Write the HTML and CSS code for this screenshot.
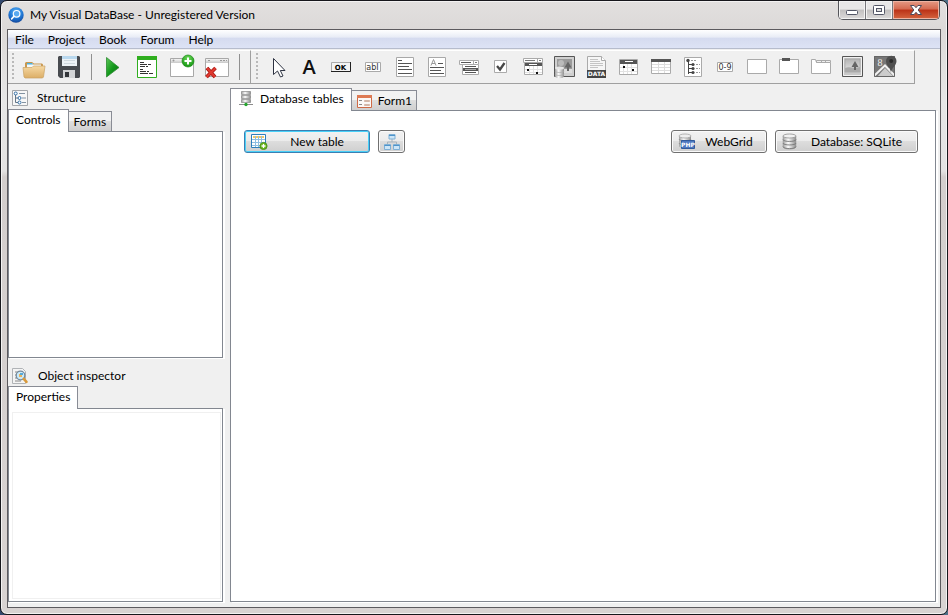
FILE: index.html
```html
<!DOCTYPE html>
<html lang="en">
<head>
<meta charset="utf-8">
<title>My Visual DataBase - Unregistered Version</title>
<link rel="stylesheet" href="styles.css">
</head>
<body>
<svg width="0" height="0" class="defs" aria-hidden="true">
  <defs>
    <linearGradient id="g-folder" x1="0" y1="0" x2="0" y2="1"><stop offset="0" stop-color="#f6d9a4"/><stop offset="1" stop-color="#dcae66"/></linearGradient>
    <linearGradient id="g-play" x1="0" y1="0" x2="1" y2="1"><stop offset="0" stop-color="#5fc75a"/><stop offset=".5" stop-color="#149a1c"/><stop offset="1" stop-color="#0a6a12"/></linearGradient>
    <linearGradient id="g-bar" x1="0" y1="0" x2="0" y2="1"><stop offset="0" stop-color="#f4f4f4"/><stop offset="1" stop-color="#c8c8c8"/></linearGradient>
    <linearGradient id="g-cyl" x1="0" y1="0" x2="1" y2="0"><stop offset="0" stop-color="#a2a2a2"/><stop offset=".4" stop-color="#fafafa"/><stop offset="1" stop-color="#8e8e8e"/></linearGradient>
    <linearGradient id="g-pic" x1="0" y1="0" x2="0" y2="1"><stop offset="0" stop-color="#b4b4b4"/><stop offset="1" stop-color="#e6e6e6"/></linearGradient>
    <radialGradient id="g-add" cx=".5" cy=".3" r=".7"><stop offset="0" stop-color="#6fdc5c"/><stop offset="1" stop-color="#12930f"/></radialGradient>
    <radialGradient id="g-app" cx=".5" cy=".3" r=".75"><stop offset="0" stop-color="#5cb4f6"/><stop offset=".6" stop-color="#1e74d2"/><stop offset="1" stop-color="#123f90"/></radialGradient>
  </defs>
</svg>

<div class="window">
  <header class="titlebar">
    <svg class="app-icon" width="16" height="16" viewBox="0 0 16 16" aria-hidden="true"><circle cx="8" cy="8" r="7.7" fill="url(#g-app)"/><circle cx="8.6" cy="6.800" r="3.300" fill="#5aaaf0" stroke="#fff" stroke-width="1.200"/><path d="M6 9.300l-2.400 2.600" stroke="#fff" stroke-width="1.600" stroke-linecap="round"/></svg>
    <h1 class="title">My Visual DataBase - Unregistered Version</h1>
    <div class="caption-buttons">
      <button class="caption min" aria-label="Minimize"><svg width="14" height="12" viewBox="0 0 14 12"><rect x="1.5" y="6.5" width="11" height="4" rx="1" fill="#fff" stroke="#535666"/></svg></button>
      <button class="caption max" aria-label="Maximize"><svg width="14" height="12" viewBox="0 0 14 12"><rect x="1.5" y="1.5" width="11" height="9" rx="1" fill="#fff" stroke="#535666"/><rect x="4.5" y="4.5" width="5" height="3" fill="#ddd" stroke="#535666"/></svg></button>
      <button class="caption close" aria-label="Close"><svg width="14" height="12" viewBox="0 0 14 12"><path d="M1.500 1.500h3.600L7 3.700l1.900-2.200h3.600L9.200 6l3.300 4.500H8.900L7 8.300l-1.900 2.200H1.500L4.800 6z" fill="#fff" stroke="#4d4a5c"/></svg></button>
    </div>
  </header>

  <div class="client">
    <nav class="menubar">
      <button>File</button><button>Project</button><button>Book</button><button>Forum</button><button>Help</button>
    </nav>

    <div class="toolbars">
      <div class="band" role="toolbar" aria-label="Project">
        <span class="grip"></span>
        <button class="tool wide" aria-label="Open"><svg width="35" height="32" viewBox="0 0 35 32"><path d="M8 20v-8l1-1h6l2 1.500h8l1 1V20z" fill="#c9984f"/><path d="M10 12h5l1 1.500h8V17H10z" fill="#f4f8fa"/><path d="M10 12h5l1 1.500h-6z" fill="#4fb0dc"/><path d="M6 16.500h9l1.500-1.500H28l-1.500 11-1 1H8l-1-1z" fill="url(#g-folder)" stroke="#c9a264" stroke-width=".7"/></svg></button>
        <button class="tool wide" aria-label="Save"><svg width="35" height="32" viewBox="0 0 35 32"><path d="M6 6l1-1h20l1 1v20l-1 1H8l-2-2z" fill="#484b50"/><path d="M10 5h15v10H10z" fill="#edf2f6"/><path d="M10 5h15v3H10z" fill="#b9d8ee"/><path d="M12 9.500h11M12 12.500h11" stroke="#cfd8de"/><path d="M11 19h12v8H11z" fill="#d3d5d7"/><path d="M13 21h4v5h-4z" fill="#33363a"/></svg></button>
        <span class="sep"></span>
        <button class="tool wide" aria-label="Run"><svg width="35" height="32" viewBox="0 0 35 32"><path d="M11.500 6.500L24 16.500l-12.500 9.500z" fill="url(#g-play)" stroke="#2b8a30" stroke-width=".8"/></svg></button>
        <button class="tool wide" aria-label="Script"><svg width="35" height="32" viewBox="0 0 35 32"><path d="M7.500 5.500h19v21h-19z" fill="#fff" stroke="#2fae1f"/><path d="M7 5h20v4H7z" fill="#2fae1f"/><path d="M10 11.500h4M10 13.500h7M18 13.500h3M10 15.500h5M16 15.500h2M10 18.500h3M10 20.500h6M17 20.500h2M10 22.500h8M19 22.500h4" stroke="#333"/></svg></button>
        <button class="tool wide" aria-label="New form"><svg width="35" height="32" viewBox="0 0 35 32"><path d="M5.500 7.500h23v18h-23z" fill="#fff" stroke="#a8a8a8"/><path d="M6 8h22v4H6z" fill="url(#g-bar)"/><circle cx="8.500" cy="9.500" r="1" fill="#999"/><circle cx="23" cy="10" r="6" fill="url(#g-add)" stroke="#1c8a18" stroke-width=".7"/><path d="M23 6.500v7M19.500 10h7" stroke="#fff" stroke-width="2"/></svg></button>
        <button class="tool wide" aria-label="Delete form"><svg width="35" height="32" viewBox="0 0 35 32"><path d="M5.500 7.500h23v18h-23z" fill="#fff" stroke="#a8a8a8"/><path d="M6 8h22v4H6z" fill="url(#g-bar)"/><path d="M8 9.500h2M20 9.500h2M23 9.500h2M26 9.500h1" stroke="#999"/><path d="M7 17l8 9M15.500 17L6.500 26" stroke="#a51410" stroke-width="3.600"/><path d="M7 17l8 9M15.500 17L6.500 26" stroke="#df3a30" stroke-width="2.200"/></svg></button>
        <span class="sep"></span>
      </div>
      <div class="band components" role="toolbar" aria-label="Components">
        <span class="grip"></span>
        <button class="tool" aria-label="Pointer"><svg width="32" height="32" viewBox="0 0 32 32"><path d="M12.500 7.500v16l4-3.500 3 6 2.500-1-2.700-5.500h4.700z" fill="#fff" stroke="#2e3342"/></svg></button>
        <button class="tool" aria-label="Label"><svg width="32" height="32" viewBox="0 0 32 32"><text x="16" y="23" class="glyph-a">A</text></svg></button>
        <button class="tool" aria-label="Button"><svg width="32" height="32" viewBox="0 0 32 32"><path d="M6.500 11.500h19v9h-19z" fill="#f4f4f4" stroke="#aaa"/><path d="M25.500 11v9.500H6" fill="none" stroke="#222"/><text x="15.500" y="19" class="glyph-ok">OK</text></svg></button>
        <button class="tool" aria-label="Edit"><svg width="32" height="32" viewBox="0 0 32 32"><path d="M8.500 11.500h15v9h-15z" fill="#fff" stroke="#aaa"/><text x="15.500" y="19" class="glyph-sm">abI</text></svg></button>
        <button class="tool" aria-label="Memo"><svg width="32" height="32" viewBox="0 0 32 32"><path d="M7.500 6.500h17v19h-17z" fill="#fff" stroke="#a8a8a8"/><path d="M9 9.500h4M9 12.500h14M9 15.500h11M9 18.500h14M9 22.500h14" stroke="#555"/></svg></button>
        <button class="tool" aria-label="Rich text"><svg width="32" height="32" viewBox="0 0 32 32"><path d="M7.500 6.500h17v19h-17z" fill="#fff" stroke="#a8a8a8"/><path d="M10 14.500l2.500-6 2.500 6M11 12.500h3" fill="none" stroke="#999"/><path d="M17 12.500h5M9 16.500h14M9 19.500h11M9 22.500h14" stroke="#555"/></svg></button>
        <button class="tool" aria-label="Combo box"><svg width="32" height="32" viewBox="0 0 32 32"><path d="M9.500 13.500h16v10h-16z" fill="#fff" stroke="#aaa"/><path d="M6.500 9.500h19v4h-19zM20.500 9.500v4" fill="#fff" stroke="#aaa"/><path d="M8 11.500h10M12 15.500h11M12 21.500h11" stroke="#555"/><path d="M10 17h15v3H10z" fill="#555"/><path d="M12 18.500h11" stroke="#aaa"/><path d="M22 11.500h2" stroke="#777"/></svg></button>
        <button class="tool" aria-label="Check box"><svg width="32" height="32" viewBox="0 0 32 32"><path d="M9.500 9.500h12v12h-12z" fill="#fff" stroke="#aaa"/><path d="M12 15l3 3.500 4.500-6.500" fill="none" stroke="#484848" stroke-width="2.300"/></svg></button>
        <button class="tool" aria-label="Date picker"><svg width="32" height="32" viewBox="0 0 32 32"><path d="M7.500 11.500h18v12h-18z" fill="#fff" stroke="#aaa"/><path d="M6.500 7.500h19v4h-19zM20.500 7.500v4" fill="#fff" stroke="#aaa"/><path d="M8 9.500h10M22 9.500h2" stroke="#777"/><path d="M8 12h17v3H8z" fill="#555"/><path d="M12 13.500h8" stroke="#fff"/><path d="M8 18.500h17M8 21.500h17M12.500 15v8M16.500 15v8M20.500 15v8" stroke="#e2e2e2"/><path d="M10 18h2v2h-2zM19 21h2v2h-2z" fill="#111"/></svg></button>
        <button class="tool" aria-label="Database image"><svg width="32" height="32" viewBox="0 0 32 32"><path d="M5.500 5.500h20v20h-20z" fill="#d0d0d0" stroke="#555"/><path d="M8 8h15v14H8z" fill="#9a9a9a"/><path d="M8 18h15v4H8z" fill="#ddd"/><path d="M19 10.500l3.500 6H20V20h-2v-3.500h-2.500z" fill="#666"/><circle cx="12" cy="12" r="3" fill="#bbb"/><path d="M6 17v8c0 3 9 3 9 0v-8z" fill="url(#g-cyl)"/><ellipse cx="10.500" cy="17" rx="4.500" ry="1.500" fill="#e5e5e5"/><path d="M6 20c0 2 9 2 9 0M6 23c0 2 9 2 9 0" fill="none" stroke="#aaa" stroke-width=".7"/></svg></button>
        <button class="tool" aria-label="Database file"><svg width="32" height="32" viewBox="0 0 32 32"><path d="M6.500 5.500h14l4 4v16h-18z" fill="#f6f6f6" stroke="#aaa"/><path d="M20.500 5.500v4h4" fill="#fff" stroke="#aaa"/><path d="M9 8.500h8M9 10.500h10M9 12.500h13M9 14.500h13M9 16.500h8" stroke="#c4c4c4"/><path d="M6 19h19v8H6z" fill="#444"/><text x="15.500" y="25" class="glyph-data">DATA</text></svg></button>
        <button class="tool" aria-label="Calendar"><svg width="32" height="32" viewBox="0 0 32 32"><path d="M6.500 8.500h18v15h-18z" fill="#fff" stroke="#aaa"/><path d="M7 9h17v4H7z" fill="#555"/><path d="M12 10.500h8" stroke="#fff"/><path d="M7 16.500h17M7 20.500h17M10.500 13v10M14.500 13v10M18.500 13v10" stroke="#e2e2e2"/><path d="M10 15h2v2h-2zM19 18h2v2h-2z" fill="#111"/></svg></button>
        <button class="tool" aria-label="Grid"><svg width="32" height="32" viewBox="0 0 32 32"><path d="M6.500 8.500h19v14h-19z" fill="#fff" stroke="#aaa"/><path d="M6 8h20v3H6z" fill="#555"/><path d="M7 13.500h18M7 16.500h18M7 19.500h18M13.500 11v11M19.500 11v11" stroke="#ddd"/></svg></button>
        <button class="tool" aria-label="Tree view"><svg width="32" height="32" viewBox="0 0 32 32"><path d="M7.500 6.500h17v19h-17z" fill="#fff" stroke="#aaa"/><path d="M11.500 9v14M12 13.500h4M12 17.500h4M12 21.500h4" stroke="#444" fill="none"/><circle cx="11" cy="9.500" r="1.700" fill="#444"/><circle cx="16" cy="13.500" r="1.600" fill="#444"/><circle cx="16" cy="17.500" r="1.600" fill="#444"/><circle cx="16" cy="21.500" r="1.600" fill="#444"/><path d="M14 9.500h5M19 13.500h4M19 17.500h4M19 21.500h4" stroke="#999" stroke-dasharray="2 1"/></svg></button>
        <button class="tool" aria-label="Counter"><svg width="32" height="32" viewBox="0 0 32 32"><path d="M8.500 11.500h15v9h-15z" fill="#fff" stroke="#aaa"/><text x="16" y="19" class="glyph-sm">0-9</text></svg></button>
        <button class="tool" aria-label="Panel"><svg width="32" height="32" viewBox="0 0 32 32"><path d="M6.500 8.500h19v14h-19z" fill="#fff" stroke="#aaa"/></svg></button>
        <button class="tool" aria-label="Group box"><svg width="32" height="32" viewBox="0 0 32 32"><path d="M6.500 8.500h19v14h-19z" fill="#fff" stroke="#aaa"/><path d="M9 7h8v3H9z" fill="#555"/></svg></button>
        <button class="tool" aria-label="Page control"><svg width="32" height="32" viewBox="0 0 32 32"><path d="M6.500 8.500h4l1 3h14v11h-19z" fill="#fff" stroke="#aaa"/><path d="M11.500 11.500v-2h14v2M16.500 9.500v2M20.500 9.500v2" fill="none" stroke="#aaa"/></svg></button>
        <button class="tool" aria-label="Image"><svg width="32" height="32" viewBox="0 0 32 32"><path d="M5.500 5.500h20v20h-20z" fill="#c8c8c8" stroke="#555"/><path d="M6.500 6.500h18v18h-18z" fill="none" stroke="#f1f1f1"/><path d="M8 8h15v13H8z" fill="url(#g-pic)" stroke="#999" stroke-width=".5"/><path d="M8 17c4-2 8 1 15-1v5H8z" fill="#aaa"/><path d="M18 10l3.500 6H19v3h-2v-3h-2.500z" fill="#666"/></svg></button>
        <button class="tool" aria-label="Map"><svg width="32" height="32" viewBox="0 0 32 32"><path d="M5 5h21v21H5z" fill="#777"/><path d="M8 26l8-9 9 9z" fill="#ccc"/><path d="M5 25l11-10.500L26 25M20 19l3-4" fill="none" stroke="#f2f2f2" stroke-width="2"/><path d="M5.500 5.500h20v20h-20z" fill="none" stroke="#666"/><text x="11" y="15" class="glyph-g">8</text><path d="M22 22c0-5-5-7-5-12a5 5 0 0 1 10.500 0c0 5-5.500 7-5.500 12z" fill="#505050"/><circle cx="22.200" cy="10" r="2" fill="#2c2c2c"/></svg></button>
      </div>
    </div>

    <main class="workspace">
      <aside class="sidebar">
        <section class="pane structure">
          <h2 class="pane-title"><svg width="16" height="16" viewBox="0 0 16 16" aria-hidden="true"><path d="M.5.500h15v15H.5z" fill="#f7f7f7" stroke="#a3a6aa"/><path d="M3.500 4v8.500H7M3.500 8H7" fill="none" stroke="#667686"/><path d="M7 3.500h6M10 8h4M10 12.500h4" stroke="#8393a2"/><circle cx="3.700" cy="3.500" r="1.500" fill="#fff" stroke="#336fa6"/><circle cx="7.500" cy="8" r="1.500" fill="#fff" stroke="#336fa6"/><circle cx="7.500" cy="12.500" r="1.500" fill="#fff" stroke="#336fa6"/></svg>Structure</h2>
          <div class="tabs" role="tablist"><button class="tab active" role="tab" aria-selected="true">Controls</button><button class="tab" role="tab" aria-selected="false">Forms</button></div>
          <div class="panel" role="tabpanel" aria-label="Controls"></div>
        </section>
        <section class="pane inspector">
          <h2 class="pane-title"><svg width="17" height="16" viewBox="0 0 17 16" aria-hidden="true"><path d="M.5.500h10l3 3v12H.5z" fill="#f4f4f4" stroke="#b0b3b6"/><path d="M3 4h3M3 7h2M3 10h2M3 13h6" stroke="#888"/><circle cx="8.500" cy="7.500" r="4.300" fill="#c9eafa" stroke="#74889a" stroke-width="1.200"/><path d="M7 6h3v3H7z" fill="#f0b45a"/><path d="M8 5h3v2H8z" fill="#58a9d8"/><path d="M11.800 10.800l2.700 3" stroke="#d99a3b" stroke-width="2.600" stroke-linecap="round"/></svg>Object inspector</h2>
          <div class="tabs" role="tablist"><button class="tab active" role="tab" aria-selected="true">Properties</button></div>
          <div class="panel" role="tabpanel" aria-label="Properties"><div class="property-list"></div></div>
        </section>
      </aside>

      <section class="document">
        <div class="tabs" role="tablist">
          <button class="tab active with-icon" role="tab" aria-selected="true"><svg width="16" height="16" viewBox="0 0 16 16"><path d="M3.500.500h9v3h-9zM3.500 4.500h9v3h-9zM3.500 8.500h9v3h-9z" fill="url(#g-cyl)" stroke="#777" stroke-width=".6"/><path d="M8 12v2M1 13.500h14" stroke="#8c8c8c"/><circle cx="8" cy="13.500" r="1.700" fill="#23a52c"/></svg>Database tables</button><button class="tab with-icon" role="tab" aria-selected="false"><svg width="16" height="16" viewBox="0 0 16 16"><path d="M1.500 2.500h14v12h-14z" fill="#fbf8f6" stroke="#cf6a46"/><path d="M1 2h15v3H1z" fill="#dd7a54"/><path d="M3 7.500h3M3 11.500h3" stroke="#888"/><path d="M8.500 7.500h5v1h-5zM8.500 11.500h5v1h-5z" fill="#fff" stroke="#c9a593" stroke-width=".8"/></svg>Form1</button>
        </div>
        <div class="panel" role="tabpanel" aria-label="Database tables">
          <div class="actions">
            <button class="push primary"><svg width="17" height="16" viewBox="0 0 17 16"><path d="M.5.500h14v13H.5z" fill="#fff" stroke="#2e7fbb"/><path d="M2 2h11v2H2z" fill="#f0c868"/><path d="M1 5.500h13M1 8.500h13M1 11.500h13M4.500 2v11M7.500 2v11M10.500 2v11" stroke="#8fbfe2"/><circle cx="12.500" cy="12" r="3.600" fill="#6bb51e" stroke="#3d8a10" stroke-width=".8"/><path d="M12.500 10v4M10.500 12h4" stroke="#fff" stroke-width="1.300"/></svg><span>New table</span></button>
            <button class="push square" aria-label="Schema"><svg width="16" height="16" viewBox="0 0 16 16"><path d="M8 5v3M3.500 11V8h9v3" fill="none" stroke="#a9b4bd"/><path d="M5 .500h6v4.500H5zM.5 10.500h6v5h-6zM9.500 10.500h6v5h-6z" fill="#cde6f7" stroke="#7fb0d6"/><path d="M5 1.500h6M.5 11.500h6M9.500 11.500h6" stroke="#4e94cb"/></svg></button>
            <button class="push webgrid"><svg width="17" height="17" viewBox="1 0 17 17"><path d="M2 3v10c0 3 12 3 12 0V3z" fill="url(#g-cyl)"/><ellipse cx="8" cy="3" rx="6" ry="2" fill="#eee" stroke="#999" stroke-width=".7"/><path d="M2 6c0 2.500 12 2.500 12 0M2 10c0 2.500 12 2.500 12 0" fill="none" stroke="#888" stroke-width=".8"/><path d="M4.500 7.500h13v8h-13z" fill="#4c78c0" stroke="#315a9c"/><text x="11" y="14" class="glyph-php">PHP</text></svg><span>WebGrid</span></button>
            <button class="push sqlite"><svg width="17" height="17" viewBox="1 0 17 17"><path d="M2 3v10.500c0 3.500 13 3.500 13 0V3z" fill="url(#g-cyl)" stroke="#999" stroke-width=".5"/><ellipse cx="8.500" cy="3" rx="6.500" ry="2" fill="#f1f1f1" stroke="#909090" stroke-width=".8"/><path d="M2 6.500c0 2.600 13 2.600 13 0M2 10c0 2.600 13 2.600 13 0M2 13.500c0 2.800 13 2.800 13 0" fill="none" stroke="#777" stroke-width=".9"/></svg><span>Database: SQLite</span></button>
          </div>
        </div>
      </section>
    </main>
  </div>
</div>
</body>
</html>
```
FILE: styles.css
```css
* { box-sizing: border-box; }

html, body { height: 100%; margin: 0; }

body {
  background: linear-gradient(90deg, #33496e, #4d7086);
  color: #000;
  font: 12px/16px Lato, "Open Sans", sans-serif;
}

button {
  margin: 0;
  padding: 0;
  border: 0;
  background: none;
  color: inherit;
  font: inherit;
}

svg { display: block; flex: none; }
.defs { position: absolute; }

.window {
  display: flex;
  flex-direction: column;
  height: 100%;
  padding: 0 6px 6px;
  border: 1px solid #17171c;
  border-radius: 7px;
  background: linear-gradient(180deg, #e2e0df 0, #dcd9d8 28px, #e6e6e6 100px, #e3e2e2 170px, #d3cecd 176px, #d8d3d2 100%);
  box-shadow: inset 0 0 0 1px #f3f2f2;
}

.titlebar {
  display: flex;
  align-items: center;
  gap: 6px;
  height: 28px;
  flex: none;
}
.app-icon { margin-left: 1px; }
.title { flex: 1; margin: 0; font-size: 12px; font-weight: 400; }

.caption-buttons {
  display: flex;
  align-self: flex-start;
  height: 19px;
  margin-right: 1px;
  border: 1px solid #55555a;
  border-top: 0;
  border-radius: 0 0 5px 5px;
  overflow: hidden;
}
.caption {
  display: grid;
  place-items: center;
  width: 27px;
  border-right: 1px solid #77777c;
  background: linear-gradient(180deg, #e8e7e7 45%, #c2c0c0 50%, #dcdada);
  box-shadow: inset 0 0 0 1px #f3f3f3;
}
.caption.close {
  width: 46px;
  border: 0;
  background: linear-gradient(180deg, #e59a85 0, #d56a51 45%, #bb3217 50%, #d56540);
  box-shadow: inset 0 0 0 1px #eeb3a2;
}

.client {
  display: flex;
  flex: 1;
  flex-direction: column;
  min-height: 0;
  border: 1px solid #5c5a5e;
  background: #f0f0f0;
}

.menubar {
  display: flex;
  flex: none;
  gap: 14px;
  height: 19px;
  padding: 1px 0 0 7px;
  border-bottom: 1px solid #b6bccc;
  background: linear-gradient(180deg, #fff 0, #e8ecf6 40%, #d5dbef 45%, #dde3f5 100%);
}

.toolbars {
  display: flex;
  flex: none;
  align-self: flex-start;
  max-width: 100%;
  overflow: hidden;
  margin-top: 1px;
  border-bottom: 1px solid #a0a0a0;
}
.band {
  display: flex;
  align-items: center;
  padding: 0 7px 0 4px;
  border-top: 1px solid #fff;
  border-right: 1px solid #a0a0a0;
}
.components { padding: 0 13px 0 5px; }
.grip {
  width: 2px;
  height: 28px;
  margin-right: 3px;
  background: repeating-linear-gradient(180deg, #b9b9b9 0, #b9b9b9 2px, transparent 2px, transparent 4px);
}
.sep { width: 8px; height: 26px; background: linear-gradient(#909090, #909090) 4px 0 / 1px 100% no-repeat; }
.tool { width: 32px; }
.tool.wide { width: 35px; }

.glyph-a { font: 600 20px "Open Sans", sans-serif; text-anchor: middle; fill: #111; }
.glyph-ok { font: 700 7px "DejaVu Sans", sans-serif; text-anchor: middle; }
.glyph-sm { font: 8px "DejaVu Sans", sans-serif; text-anchor: middle; fill: #333; }
.glyph-data { font: 700 6px "DejaVu Sans", sans-serif; text-anchor: middle; fill: #fff; }
.glyph-g { font: 10px "Liberation Serif", serif; text-anchor: middle; fill: #eee; }
.glyph-php { font: 700 6px "DejaVu Sans", sans-serif; text-anchor: middle; fill: #fff; }

.workspace {
  display: flex;
  flex: 1;
  gap: 7px;
  min-height: 0;
  padding: 0 4px 5px 0;
}
.sidebar { display: flex; flex-direction: column; flex: none; width: 215px; }
.pane { display: flex; flex-direction: column; }
.structure { flex: 274; }
.inspector { flex: 244; }
.pane-title {
  display: flex;
  align-items: center;
  gap: 9px;
  margin: 0;
  padding: 6px 4px 3px;
  font-size: 12px;
  font-weight: 400;
}
.inspector .pane-title { padding-top: 10px; padding-bottom: 2px; }

.panel {
  flex: 1;
  border: 1px solid #828790;
  background: #fff;
  box-shadow: 2px 1px 0 #fff;
}
.property-list { height: 100%; border: 1px solid #f0f0f0; }
.inspector .panel { padding: 3px 1px 2px 3px; }

.tabs { display: flex; align-items: flex-end; height: 22px; flex: none; }
.tab {
  height: 20px;
  padding: 0 5px;
  border: 1px solid #898c95;
  border-bottom: 0;
  border-left-width: 0;
  background: linear-gradient(180deg, #f2f2f2 45%, #dedede 50%, #cfcfcf);
  white-space: nowrap;
}
.tab.active {
  position: relative;
  z-index: 1;
  height: 23px;
  margin-bottom: -1px;
  padding: 0 7px 2px;
  border-left-width: 1px;
  background: #fff;
}
.with-icon { display: flex; align-items: center; gap: 6px; padding: 0 4px; }

.document { display: flex; flex: 1; flex-direction: column; min-width: 0; padding-top: 4px; }
.actions { display: flex; gap: 8px; padding: 19px 17px 0 13px; }
.push {
  display: flex;
  align-items: center;
  height: 23px;
  padding: 0 3px 0 6px;
  border: 1px solid #707070;
  border-radius: 3px;
  background: linear-gradient(180deg, #f2f2f2 0, #ebebeb 49%, #dddddd 50%, #cfcfcf 100%);
  box-shadow: inset 0 0 0 1px #fafafa;
}
.push span { flex: 1; text-align: center; white-space: nowrap; }
.primary { width: 126px; border-color: #3c7fb1; box-shadow: inset 0 0 0 1px #48d0f8; }
.square { width: 27px; padding: 0 5px; }
.webgrid { width: 96px; margin-left: auto; }
.sqlite { width: 143px; }
```
